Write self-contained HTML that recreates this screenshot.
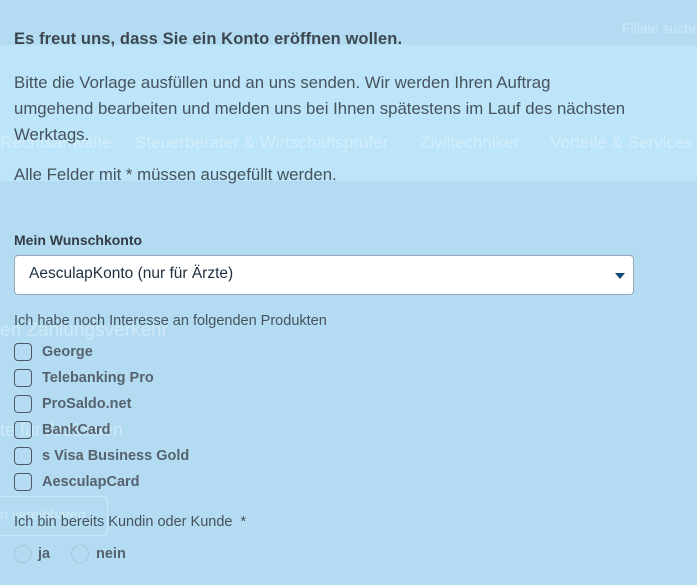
<!DOCTYPE html>
<html><head><meta charset="utf-8"><style>
body{margin:0;width:697px;height:585px;overflow:hidden;background:#b3dcf3;font-family:"Liberation Sans",sans-serif;color:#3a4550;position:relative}
.band{position:absolute;left:0;top:45px;width:697px;height:136px;background:#bce5f9}
.g{position:absolute;color:rgba(255,255,255,.35);font-size:17px;white-space:nowrap}
.t{position:absolute;left:14px;white-space:nowrap}
.p{font-size:16.5px;color:#46525c}
.cb{position:absolute;left:14px;width:16px;height:16px;border:1.5px solid #4d5a66;border-radius:4px}
.cl{position:absolute;left:42px;font-size:14.5px;font-weight:bold;color:#56626d}
.rd{position:absolute;width:16px;height:16px;border:1px solid #a6c6da;border-radius:50%}
</style></head><body>
<div class="band"></div>
<div class="g" style="left:622px;top:20px;font-size:14px">Filiale suche</div>
<div class="g" style="left:0;top:133px">Rechtsanwälte</div>
<div class="g" style="left:135px;top:133px">Steuerberater &amp; Wirtschaftsprüfer</div>
<div class="g" style="left:420px;top:133px">Ziviltechniker</div>
<div class="g" style="left:550px;top:133px">Vorteile &amp; Services</div>
<div class="g" style="left:0;top:320px;font-size:19px">en Zahlungsverkehr</div>
<div class="g" style="left:0;top:420px;font-size:18px">te für ÄrztInnen</div>
<div class="g" style="left:0;top:506px;font-size:14px">n vereinbaren</div>
<div style="position:absolute;left:-5px;top:496px;width:111px;height:38px;border:1px solid rgba(255,255,255,.35);border-radius:4px"></div>
<div class="t" style="top:30px;font-size:16.5px;font-weight:bold;color:#3d4750;letter-spacing:0.1px">Es freut uns, dass Sie ein Konto eröffnen wollen.</div>
<div class="t p" style="top:70px;line-height:26px;font-size:16.8px">Bitte die Vorlage ausfüllen und an uns senden. Wir werden Ihren Auftrag<br>umgehend bearbeiten und melden uns bei Ihnen spätestens im Lauf des nächsten<br>Werktags.</div>
<div class="t p" style="top:165px;font-size:16.8px">Alle Felder mit * müssen ausgefüllt werden.</div>
<div class="t" style="top:232px;font-size:14px;font-weight:bold;color:#333b44">Mein Wunschkonto</div>
<div style="position:absolute;left:14px;top:255px;width:618px;height:38px;background:#fff;border:1px solid #98a8b8;border-radius:4px"></div>
<div class="t" style="left:29px;top:265px;font-size:15.5px;color:#1f2f40">AesculapKonto (nur für Ärzte)</div>
<div style="position:absolute;left:615px;top:273px;width:0;height:0;border-left:5px solid transparent;border-right:5px solid transparent;border-top:6px solid #0d4a7a"></div>
<div class="t" style="top:313px;font-size:14.5px;color:#46525c">Ich habe noch Interesse an folgenden Produkten</div>
<div class="cb" style="top:343px"></div><div class="cl" style="top:344px">George</div>
<div class="cb" style="top:369px"></div><div class="cl" style="top:370px">Telebanking Pro</div>
<div class="cb" style="top:395px"></div><div class="cl" style="top:396px">ProSaldo.net</div>
<div class="cb" style="top:421px"></div><div class="cl" style="top:422px">BankCard</div>
<div class="cb" style="top:447px"></div><div class="cl" style="top:448px">s Visa Business Gold</div>
<div class="cb" style="top:473px"></div><div class="cl" style="top:474px">AesculapCard</div>
<div class="t" style="top:514px;font-size:14.5px;color:#46525c">Ich bin bereits Kundin oder Kunde &nbsp;*</div>
<div class="rd" style="left:14px;top:545px"></div><div class="cl" style="left:38px;top:546px">ja</div>
<div class="rd" style="left:71px;top:545px"></div><div class="cl" style="left:96px;top:546px">nein</div>
</body></html>
